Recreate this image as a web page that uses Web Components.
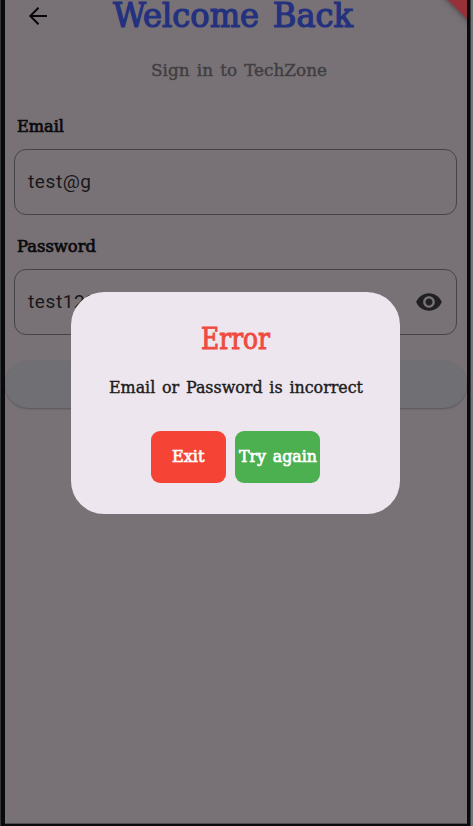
<!DOCTYPE html>
<html lang="en">
<head>
<meta charset="utf-8">
<title>TechZone sign in</title>
<style>
html,body{margin:0;height:100%;overflow:hidden;background:#000}
</style>
</head>
<body>
<login-app></login-app>
<script>
const define = (name, html, setup) => customElements.define(name, class extends HTMLElement {
  connectedCallback() {
    if (this.shadowRoot) return;
    const root = this.attachShadow({mode: 'open'});
    const t = document.createElement('template');
    t.innerHTML = html;
    root.append(t.content.cloneNode(true));
    if (setup) setup(this, root);
  }
});

/* One line of slab serif text set to a fixed measure. */
define('slab-text', `<style>
  :host{display:block;flex:none;line-height:0}
  svg{display:block;overflow:visible}
  text{font-family:"Roboto Slab","DejaVu Serif Condensed","DejaVu Serif",serif;fill:currentColor;stroke:currentColor;word-spacing:.1em}
</style><svg><text x="0"></text></svg>`, (el, root) => {
  const svg = root.querySelector('svg'), text = root.querySelector('text');
  const size = +el.getAttribute('size'), w = el.getAttribute('measure');
  svg.setAttribute('width', w);
  svg.setAttribute('height', size);
  text.setAttribute('y', size);
  text.setAttribute('font-size', size);
  text.setAttribute('font-weight', el.getAttribute('weight') || 400);
  text.setAttribute('stroke-width', el.getAttribute('stroke') || 0.3);
  text.setAttribute('textLength', w);
  text.setAttribute('lengthAdjust', 'spacingAndGlyphs');
  text.textContent = el.getAttribute('text');
});

define('text-field', `<style>
  :host{display:flex;align-items:center;justify-content:space-between;box-sizing:border-box;height:66px;margin:0 10px 0 9px;
    padding:0 13px 0 13px;border:1.4px solid #464246;border-radius:12px;
    font:19px/24px Roboto,sans-serif;letter-spacing:.6px;color:#19171a}
</style><span><slot></slot></span><slot name="icon"></slot>`);

define('eye-icon', `<style>:host{display:block;width:28px;height:28px}svg{display:block}</style>
<svg width="28" height="28" viewBox="0 0 24 24" fill="#202022"><path d="M12 4.5C7 4.5 2.73 7.61 1 12c1.73 4.39 6 7.5 11 7.5s9.27-3.11 11-7.5c-1.73-4.39-6-7.5-11-7.5zM12 17c-2.76 0-5-2.24-5-5s2.24-5 5-5 5 2.24 5 5-2.24 5-5 5zm0-8c-1.66 0-3 1.34-3 3s1.34 3 3 3 3-1.34 3-3-1.34-3-3-3z"/></svg>`);

define('back-arrow', `<style>:host{display:block;width:18px;height:18px}svg{display:block}</style>
<svg width="18" height="18" viewBox="0 0 18 18" fill="none" stroke="#050505" stroke-width="2"><path d="M18 9H1.5M9.5 .8L1.3 9l8.2 8.2"/></svg>`);

define('dialog-button', `<style>
  :host{display:flex;align-items:center;justify-content:center;box-sizing:border-box;height:52px;padding-bottom:7.5px;border-radius:9px;color:#fff}
  :host([kind=exit]){width:75px;background:#f54336}
  :host([kind=retry]){width:85.5px;background:#4caf50}
</style><slot></slot>`);

define('error-dialog', `<style>
  :host{display:flex;flex-direction:column;align-items:center;box-sizing:border-box;width:329px;height:221.5px;
    background:#ede6ee;border-radius:33px;padding-top:28px}
  .title{color:#f04a40;height:29px;margin-bottom:27px}
  .message{color:#1d1b20;height:17px}
  .actions{display:flex;gap:9px;margin-top:38px}
</style>
<slab-text class="title" text="Error" size="29" measure="69" stroke=".9"></slab-text>
<slab-text class="message" text="Email or Password is incorrect" size="17" measure="254" stroke=".4"></slab-text>
<div class="actions">
  <dialog-button kind="exit"><slab-text text="Exit" size="17" measure="32.5" stroke=".65"></slab-text></dialog-button>
  <dialog-button kind="retry"><slab-text text="Try again" size="17" measure="78" stroke=".65"></slab-text></dialog-button>
</div>`);

define('login-app', `<style>
  :host{display:block;position:relative;box-sizing:border-box;width:473px;height:826px;overflow:hidden;
    padding:0 6px 2.5px 5px;background:linear-gradient(90deg,#343638 0 1px,#080a0b 1px 470px,#3c3c3e 470px 471px,#777578 471px)}
  .screen{position:relative;box-sizing:border-box;height:823.5px;overflow:hidden;background:#787276;border-bottom:1px solid #514d50}
  header{display:flex;align-items:flex-start;height:69px}
  back-arrow{margin:7px 0 0 24px}
  .welcome{color:#24317f;margin:-7px 0 0 66px}
  .sub{display:block;color:#403e41;margin:-11.5px 0 0 146px;height:17px}
  .label{color:#0b0a0c;margin-left:11.5px;height:17px}
  .email{margin-top:40px}
  .password{margin-top:20.5px}
  .email + text-field{margin-top:17px}
  .password + text-field{margin-top:17px}
  .submit{height:47px;margin-top:26px;border-radius:24px;background:#706f74;box-shadow:0 1px 2px #59555a}
  .ribbon{position:absolute;right:-44px;top:-26px;width:120px;height:24px;transform:rotate(45deg);background:#963039;box-shadow:0 0 6px #3c383c}
  error-dialog{position:absolute;left:71px;top:292px}
</style>
<main class="screen">
  <header><back-arrow></back-arrow><slab-text class="welcome" text="Welcome Back" size="34" measure="240" stroke="1.2"></slab-text></header>
  <slab-text class="sub" text="Sign in to TechZone" size="17.5" measure="176" stroke=".4"></slab-text>
  <slab-text class="label email" text="Email" size="16.5" measure="47" stroke=".65"></slab-text>
  <text-field>test@g</text-field>
  <slab-text class="label password" text="Password" size="16.5" measure="79" stroke=".65"></slab-text>
  <text-field>test123<eye-icon slot="icon"></eye-icon></text-field>
  <div class="submit"></div>
  <div class="ribbon"></div>
</main>
<error-dialog></error-dialog>`);
</script>
</body>
</html>
